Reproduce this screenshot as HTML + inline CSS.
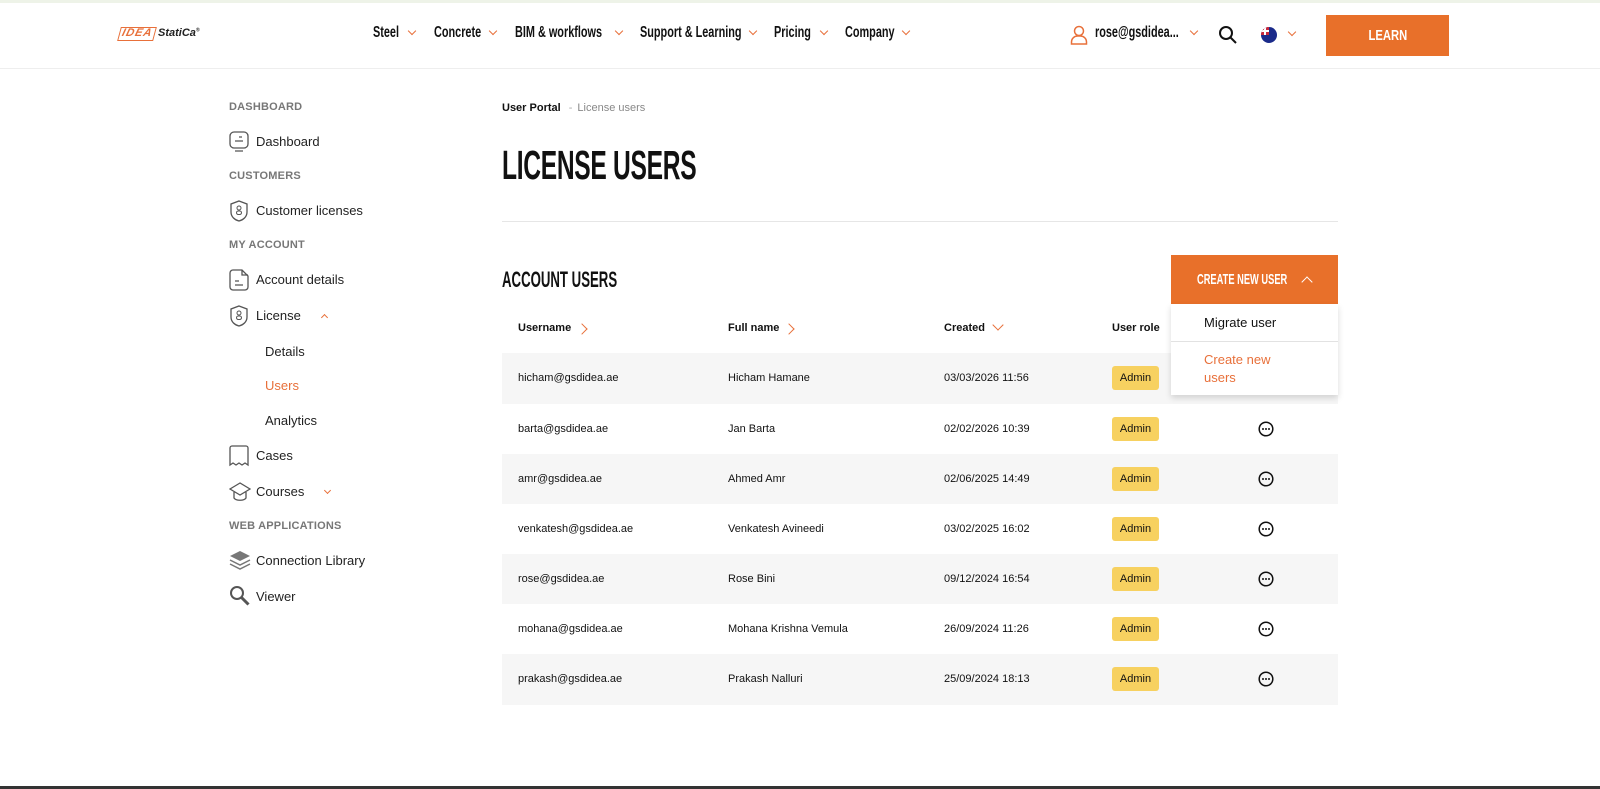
<!DOCTYPE html>
<html><head><meta charset="utf-8"><style>
*{margin:0;padding:0;box-sizing:border-box}
body{width:1600px;height:789px;overflow:hidden;background:#fff;font-family:"Liberation Sans",Arial,sans-serif;color:#111;position:relative}
.a{position:absolute;white-space:nowrap}
.c{font-family:"Liberation Sans Narrow","Liberation Sans",sans-serif;font-weight:bold;display:inline-block;transform-origin:0 50%}
.chev{position:absolute;width:6px;height:6px;border-right:1.5px solid #e8703a;border-bottom:1.5px solid #e8703a;transform:rotate(45deg)}
.side-h{position:absolute;left:229px;font-size:11px;font-weight:bold;color:#777;letter-spacing:.2px}
.side-i{position:absolute;left:256px;font-size:13px;color:#222}
.ico{position:absolute;left:229px}
.row{position:absolute;left:502px;width:836px;height:50px;font-size:11px;color:#111}
.row span{position:absolute;top:19px}
.badge{position:absolute;left:610px;top:13px;width:47px;height:24px;background:#f7d160;border-radius:3px;font-size:11px;text-align:center;line-height:24px}
.dots{position:absolute;left:756px;top:17px}
</style></head><body>
<div class="a" style="left:0;top:0;width:1600px;height:3px;background:#eef3e8"></div>
<div class="a" style="left:0;top:68px;width:1600px;height:1px;background:#eee"></div>
<div class="a" style="left:119px;top:27px;width:36px;height:14px;border:1.5px solid #e8703a;transform:skewX(-15deg);color:#e8703a;font:bold italic 11px 'Liberation Sans';line-height:11px;text-align:center;letter-spacing:1px">IDEA</div>
<div class="a" style="left:158px;top:27px;font:bold italic 11px 'Liberation Sans';color:#222">StatiCa<sup style="font-size:5px">®</sup></div>
<div class="a c" style="left:373px;top:24px;font-size:16px;transform:scaleX(.68)">Steel</div><div class="chev" style="left:409px;top:28px"></div>
<div class="a c" style="left:434px;top:24px;font-size:16px;transform:scaleX(.68)">Concrete</div><div class="chev" style="left:490px;top:28px"></div>
<div class="a c" style="left:515px;top:24px;font-size:16px;transform:scaleX(.68)">BIM &amp; workflows</div><div class="chev" style="left:616px;top:28px"></div>
<div class="a c" style="left:640px;top:24px;font-size:16px;transform:scaleX(.68)">Support &amp; Learning</div><div class="chev" style="left:750px;top:28px"></div>
<div class="a c" style="left:774px;top:24px;font-size:16px;transform:scaleX(.68)">Pricing</div><div class="chev" style="left:821px;top:28px"></div>
<div class="a c" style="left:845px;top:24px;font-size:16px;transform:scaleX(.68)">Company</div><div class="chev" style="left:903px;top:28px"></div>
<svg class="a" style="left:1070px;top:25px" width="18" height="20" viewBox="0 0 18 20"><circle cx="9" cy="6" r="4.5" fill="none" stroke="#e8703a" stroke-width="1.5"/><path d="M1.5 19v-2a6 6 0 0 1 6-6h3a6 6 0 0 1 6 6v2z" fill="none" stroke="#e8703a" stroke-width="1.5"/></svg>
<div class="a c" style="left:1095px;top:24px;font-size:16px;transform:scaleX(.68)">rose@gsdidea...</div><div class="chev" style="left:1191px;top:28px"></div>
<svg class="a" style="left:1218px;top:25px" width="20" height="20" viewBox="0 0 20 20"><circle cx="8" cy="8" r="6" fill="none" stroke="#111" stroke-width="2"/><path d="M12.5 12.5l5.5 5.5" stroke="#111" stroke-width="2"/></svg>
<div class="a" style="left:1261px;top:27px;width:16px;height:16px;border-radius:50%;background:#1a2a8a;overflow:hidden"><div style="position:absolute;left:0;top:0;width:8px;height:8px;background:#c8283c"></div><div style="position:absolute;left:3px;top:0;width:2px;height:8px;background:#fff"></div><div style="position:absolute;left:0;top:3px;width:8px;height:2px;background:#fff"></div></div>
<div class="chev" style="left:1289px;top:29px"></div>
<div class="a" style="left:1326px;top:15px;width:123px;height:41px;background:#e8702a;color:#fff;text-align:center;line-height:41px"><span class="c" style="font-size:15px;transform:scaleX(.75);transform-origin:50% 50%">LEARN</span></div>
<div class="side-h" style="top:101px">DASHBOARD</div>
<svg class="ico" style="top:131px" width="20" height="22" viewBox="0 0 20 22"><rect x="1" y="1" width="18" height="16" rx="4" fill="none" stroke="#555" stroke-width="1.3"/><path d="M6 10h8M10 6h3M6 20h8" stroke="#555" stroke-width="1.3"/></svg>
<div class="side-i" style="top:134px">Dashboard</div>
<div class="side-h" style="top:170px">CUSTOMERS</div>
<svg class="ico" style="top:200px" width="20" height="22" viewBox="0 0 20 22"><path d="M10 1l8 3v8c0 5-4 8-8 9-4-1-8-4-8-9V4z" fill="none" stroke="#555" stroke-width="1.3"/><circle cx="10" cy="8" r="2" fill="none" stroke="#555"/><rect x="7.5" y="11" width="5" height="3.5" rx="1.7" fill="none" stroke="#555"/></svg>
<div class="side-i" style="top:203px">Customer licenses</div>
<div class="side-h" style="top:239px">MY ACCOUNT</div>
<svg class="ico" style="top:269px" width="20" height="22" viewBox="0 0 20 22"><path d="M13 1H4a3 3 0 0 0-3 3v14a3 3 0 0 0 3 3h12a3 3 0 0 0 3-3V7z" fill="none" stroke="#555" stroke-width="1.3"/><path d="M6 12h4M6 16h8M13 1v5h6" fill="none" stroke="#555" stroke-width="1.3"/></svg>
<div class="side-i" style="top:272px">Account details</div>
<svg class="ico" style="top:305px" width="20" height="22" viewBox="0 0 20 22"><path d="M10 1l8 3v8c0 5-4 8-8 9-4-1-8-4-8-9V4z" fill="none" stroke="#555" stroke-width="1.3"/><circle cx="10" cy="8" r="2" fill="none" stroke="#555"/><rect x="7.5" y="11" width="5" height="3.5" rx="1.7" fill="none" stroke="#555"/></svg>
<div class="side-i" style="top:308px">License</div>
<div class="chev" style="left:322px;top:315px;transform:rotate(225deg);width:5px;height:5px"></div>
<div class="side-i" style="left:265px;top:344px">Details</div>
<div class="side-i" style="left:265px;top:378px;color:#e8703a">Users</div>
<div class="side-i" style="left:265px;top:413px">Analytics</div>
<svg class="ico" style="top:445px" width="20" height="22" viewBox="0 0 20 22"><path d="M3 1h14a2 2 0 0 1 2 2v17l-3-2-3 2-3-2-3 2-3-2-3 2V3a2 2 0 0 1 2-2z" fill="none" stroke="#555" stroke-width="1.3"/></svg>
<div class="side-i" style="top:448px">Cases</div>
<svg class="ico" style="top:481px" width="22" height="22" viewBox="0 0 22 22"><path d="M11 2L1 8l10 6 10-6z M5 11v6c2 3 10 3 12 0v-6" fill="none" stroke="#555" stroke-width="1.3"/></svg>
<div class="side-i" style="top:484px">Courses</div>
<div class="chev" style="left:325px;top:488px;width:5px;height:5px"></div>
<div class="side-h" style="top:520px">WEB APPLICATIONS</div>
<svg class="ico" style="top:550px" width="22" height="22" viewBox="0 0 22 22"><path d="M11 1L1 6l10 5 10-5z" fill="#777"/><path d="M1 10l10 5 10-5M1 14l10 5 10-5" fill="none" stroke="#777" stroke-width="1.5"/></svg>
<div class="side-i" style="top:553px">Connection Library</div>
<svg class="ico" style="top:585px" width="22" height="22" viewBox="0 0 22 22"><circle cx="8" cy="8" r="6" fill="none" stroke="#555" stroke-width="2"/><path d="M12.5 12.5l7 7" stroke="#555" stroke-width="3"/></svg>
<div class="side-i" style="top:589px">Viewer</div>
<div class="a" style="left:502px;top:102px;font-size:11px;font-weight:bold">User Portal <span style="color:#aaa;font-weight:normal;margin:0 5px">-</span><span style="color:#888;font-weight:normal">License users</span></div>
<div class="a c" style="left:502px;top:142px;font-size:41px;transform:scaleX(.6);letter-spacing:-.5px">LICENSE USERS</div>
<div class="a" style="left:502px;top:221px;width:836px;height:1px;background:#e6e6e6"></div>
<div class="a c" style="left:502px;top:267px;font-size:22px;transform:scaleX(.6)">ACCOUNT USERS</div>
<div class="a" style="left:518px;top:322px;font-size:11px;font-weight:bold">Username</div><div class="chev" style="left:578px;top:325px;transform:rotate(-45deg);width:8px;height:8px"></div>
<div class="a" style="left:728px;top:322px;font-size:11px;font-weight:bold">Full name</div><div class="chev" style="left:785px;top:325px;transform:rotate(-45deg);width:8px;height:8px"></div>
<div class="a" style="left:944px;top:322px;font-size:11px;font-weight:bold">Created</div><div class="chev" style="left:994px;top:321px;width:8px;height:8px"></div>
<div class="a" style="left:1112px;top:322px;font-size:11px;font-weight:bold">User role</div>
<svg width="0" height="0" style="position:absolute"><defs><g id="d"><circle cx="8" cy="8" r="6.8" fill="none" stroke="#111" stroke-width="1.5"/><circle cx="5" cy="8" r="1" fill="#111"/><circle cx="8" cy="8" r="1" fill="#111"/><circle cx="11" cy="8" r="1" fill="#111"/></g></defs></svg>
<div class="row" style="top:353px;background:#f6f6f6;height:51px"><span style="left:16px">hicham@gsdidea.ae</span><span style="left:226px">Hicham Hamane</span><span style="left:442px">03/03/2026 11:56</span><div class="badge">Admin</div></div>
<div class="row" style="top:404px"><span style="left:16px">barta@gsdidea.ae</span><span style="left:226px">Jan Barta</span><span style="left:442px">02/02/2026 10:39</span><div class="badge">Admin</div><svg class="dots" width="16" height="16"><use href="#d"/></svg></div>
<div class="row" style="top:454px;background:#f6f6f6"><span style="left:16px">amr@gsdidea.ae</span><span style="left:226px">Ahmed Amr</span><span style="left:442px">02/06/2025 14:49</span><div class="badge">Admin</div><svg class="dots" width="16" height="16"><use href="#d"/></svg></div>
<div class="row" style="top:504px"><span style="left:16px">venkatesh@gsdidea.ae</span><span style="left:226px">Venkatesh Avineedi</span><span style="left:442px">03/02/2025 16:02</span><div class="badge">Admin</div><svg class="dots" width="16" height="16"><use href="#d"/></svg></div>
<div class="row" style="top:554px;background:#f6f6f6"><span style="left:16px">rose@gsdidea.ae</span><span style="left:226px">Rose Bini</span><span style="left:442px">09/12/2024 16:54</span><div class="badge">Admin</div><svg class="dots" width="16" height="16"><use href="#d"/></svg></div>
<div class="row" style="top:604px"><span style="left:16px">mohana@gsdidea.ae</span><span style="left:226px">Mohana Krishna Vemula</span><span style="left:442px">26/09/2024 11:26</span><div class="badge">Admin</div><svg class="dots" width="16" height="16"><use href="#d"/></svg></div>
<div class="row" style="top:654px;background:#f6f6f6;height:51px"><span style="left:16px">prakash@gsdidea.ae</span><span style="left:226px">Prakash Nalluri</span><span style="left:442px">25/09/2024 18:13</span><div class="badge">Admin</div><svg class="dots" width="16" height="16"><use href="#d"/></svg></div>
<div class="a" style="left:1171px;top:255px;width:167px;height:49px;background:#e8702a;color:#fff"><span class="c" style="position:absolute;left:26px;top:16px;font-size:15px;transform:scaleX(.62)">CREATE NEW USER</span><div style="position:absolute;left:132px;top:23px;width:8px;height:8px;border-left:1.5px solid #fff;border-top:1.5px solid #fff;transform:rotate(45deg)"></div></div>
<div class="a" style="left:1171px;top:304px;width:167px;height:91px;background:#fff;box-shadow:0 3px 6px rgba(0,0,0,.15)">
<div style="position:absolute;left:33px;top:11px;font-size:13px">Migrate user</div>
<div style="position:absolute;left:0;top:37px;width:167px;height:1px;background:#e2e2e2"></div>
<div style="position:absolute;left:33px;top:47px;font-size:13px;color:#e8703a;line-height:18px">Create new<br>users</div>
</div>
<div class="a" style="left:0;top:786px;width:1600px;height:3px;background:#333"></div>
</body></html>
